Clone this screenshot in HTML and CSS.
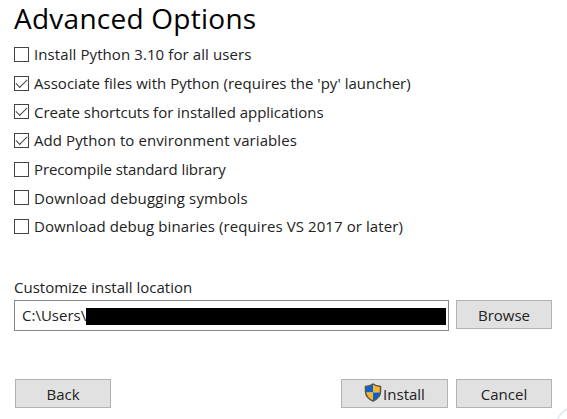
FILE: index.html
```html
<!DOCTYPE html>
<html lang="en">
<head>
    <meta charset="UTF-8">
    <meta name="viewport" content="width=device-width, initial-scale=1.0">
    <title>Python Setup</title>
    <link rel="stylesheet" href="styles.css">
</head>
<body>
    <div class="setup">
        <h1>Advanced Options</h1>

        <div class="options">
            <label class="option"><input type="checkbox"><span class="t-users">Install Python 3.10 for all users</span></label>
            <label class="option"><input type="checkbox" checked><span class="t-files">Associate files with Python (requires the 'py' launcher)</span></label>
            <label class="option"><input type="checkbox" checked><span class="t-shortcuts">Create shortcuts for installed applications</span></label>
            <label class="option"><input type="checkbox" checked><span class="t-env">Add Python to environment variables</span></label>
            <label class="option"><input type="checkbox"><span class="t-lib">Precompile standard library</span></label>
            <label class="option"><input type="checkbox"><span class="t-symbols">Download debugging symbols</span></label>
            <label class="option"><input type="checkbox"><span class="t-binaries">Download debug binaries (requires VS 2017 or later)</span></label>
        </div>

        <div class="location-label">Customize install location</div>
        <div class="location">
            <div class="path"><span>C:\Users\</span><div class="redacted"></div></div>
            <button class="btn">Browse</button>
        </div>

        <div class="footer">
            <button class="btn back">Back</button>
            <button class="btn install">
                <svg class="shield" viewBox="0 0 18 19" width="18" height="19">
                    <path d="M9 1C7 2.6 4.5 3.3 1.5 3.4V9.500H9Z" fill="#0b64c8"/>
                    <path d="M9 1C11 2.6 13.5 3.3 16.5 3.4V9.500H9Z" fill="#fdb52f"/>
                    <path d="M1.5 9.5H9V18C4.5 16 1.8 13 1.5 9.500Z" fill="#fdb52f"/>
                    <path d="M9 9.5H16.5C16.2 13 13.5 16 9 18Z" fill="#0b64c8"/>
                    <path d="M9 1C7 2.6 4.5 3.3 1.5 3.4V8.5C1.6 12.8 4.5 16 9 18C13.5 16 16.4 12.8 16.5 8.5V3.4C13.5 3.3 11 2.6 9 1Z" fill="none" stroke="#5a5650" stroke-width="1.5"/>
                </svg>
                <span>Install</span>
            </button>
            <button class="btn">Cancel</button>
        </div>
    </div>
    <svg class="corner" viewBox="0 0 10 12" width="10" height="12">
        <path d="M0.500 12C2.500 8 5.500 4.500 10 1.500" fill="none" stroke="#dce9f3" stroke-width="1.500"/>
    </svg>
</body>
</html>
```

FILE: styles.css
```css
* {
    box-sizing: border-box;
}

body {
    margin: 0;
    height: 419px;
    overflow: hidden;
    position: relative;
    background-color: #fff;
    color: #222;
    font-family: 'Open Sans', 'Noto Sans', sans-serif;
    font-size: 15px;
}

.setup {
    width: 552px;
    padding-left: 14px;
}

h1 {
    margin: 0;
    height: 40px;
    line-height: 36px;
    font-size: 28px;
    font-weight: normal;
    letter-spacing: 0.25px;
    color: #000;
    white-space: nowrap;
}

.options {
    height: 201px;
    display: grid;
    grid-template-rows: repeat(7, 28.7px);
}

.option {
    display: flex;
    align-items: center;
    gap: 5px;
    white-space: nowrap;
}

.option input {
    appearance: none;
    width: 15px;
    height: 15px;
    margin: 0;
    border: 1px solid #444;
    background-color: #fff;
    display: grid;
    place-items: center;
}

.option input:checked::before {
    content: "";
    width: 10px;
    height: 5px;
    margin-top: -3px;
    border-left: 1.5px solid #444;
    border-bottom: 1.5px solid #444;
    transform: rotate(-45deg);
}

/* Label tracking */
.t-users,
.t-env,
.t-binaries {
    letter-spacing: 0.09px;
}

.t-files {
    letter-spacing: 0.02px;
}

.t-shortcuts {
    letter-spacing: -0.03px;
}

.t-lib {
    letter-spacing: -0.1px;
}

.t-symbols {
    letter-spacing: 0.15px;
}

.location-label {
    margin-top: 36px;
    height: 23px;
    line-height: 21px;
}

.location {
    display: flex;
    justify-content: space-between;
    width: 538px;
}

.path {
    display: flex;
    align-items: center;
    width: 435px;
    height: 31px;
    padding: 0 2px 0 7px;
    border: 1px solid #888;
}

.path span {
    width: 64px;
    margin-top: -1px;
}

.redacted {
    flex: 1;
    height: 17px;
    margin-top: 1px;
    background-color: #000;
}

.btn {
    width: 96px;
    height: 29px;
    padding: 0;
    border: 1px solid #b2b2b2;
    background-color: #e1e1e1;
    color: #222;
    font: inherit;
    display: flex;
    align-items: center;
    justify-content: center;
}

.footer {
    display: flex;
    gap: 8px;
    width: 538px;
    margin-top: 48px;
    padding-left: 1px;
}

.back {
    margin-right: auto;
}

.install {
    width: 107px;
    gap: 1px;
}

.shield {
    margin-top: -3px;
}

.corner {
    position: absolute;
    right: 0;
    bottom: 0;
}
```
